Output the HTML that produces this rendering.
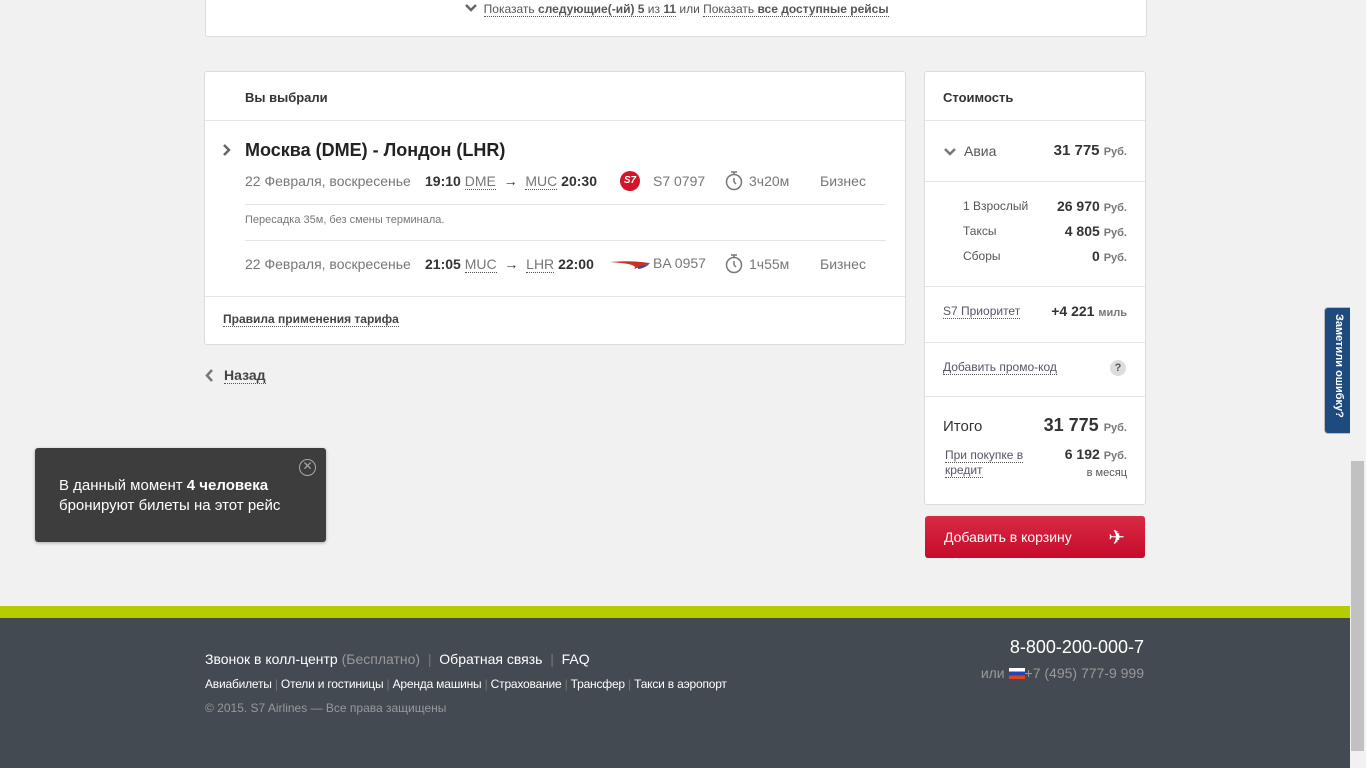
<!DOCTYPE html>
<html><head><meta charset="utf-8"><style>
*{margin:0;padding:0;box-sizing:border-box}
body{width:1366px;height:768px;overflow:hidden;background:#f1f1f1;font-family:"Liberation Sans",sans-serif;color:#333;position:relative;font-size:13px}
.a{position:absolute}
.card{position:absolute;background:#fff;border:1px solid #dcdcdc;border-radius:3px}
.g{color:#777}
.u{border-bottom:1px dotted #555}
.hr{position:absolute;height:1px;background:#e5e5e5}
.b{font-weight:bold}
.r{font-size:11px;color:#777;font-weight:bold}
.sep{color:#777}
</style></head><body>
<div class="card" style="left:205px;top:-4px;width:942px;height:41px"></div>
<div class="a" style="left:465px;top:2px;font-size:12px;color:#555"><svg width="12" height="8" style="vertical-align:1px"><path d="M1 1 L6 6 L11 1" stroke="#666" stroke-width="2.5" fill="none"/></svg>&nbsp; <span class="u">Показать <b>следующие(-ий) 5</b> из <b>11</b></span> или <span class="u">Показать <b>все доступные рейсы</b></span></div>

<div class="card" style="left:204px;top:71px;width:702px;height:274px">
<div class="a b" style="left:40px;top:18px;font-size:13px">Вы выбрали</div>
<div class="hr" style="left:0;right:0;top:48px"></div>
<svg class="a" style="left:18px;top:72px" width="8" height="12"><path d="M1 1 L6 6 L1 11" stroke="#666" stroke-width="2.5" fill="none"/></svg>
<div class="a b" style="left:40px;top:68px;font-size:18px;color:#222">Москва (DME) - Лондон (LHR)</div>
<div class="a g" style="left:40px;top:101px;font-size:14px">22 Февраля, воскресенье</div>
<div class="a" style="left:220px;top:101px;font-size:14px"><b>19:10</b> <span class="u g">DME</span> &nbsp;→&nbsp; <span class="u g">MUC</span> <b>20:30</b></div>
<div class="a" style="left:415px;top:99px;width:20px;height:20px;border-radius:50%;background:#d4142b;color:#fff;font-size:10px;font-weight:bold;text-align:center;line-height:20px;font-style:italic">S7</div>
<div class="a g" style="left:448px;top:101px;font-size:14px">S7 0797</div>
<svg class="a" style="left:519px;top:97px" width="20" height="22"><circle cx="10" cy="13" r="7.5" stroke="#777" stroke-width="1.5" fill="none"/><path d="M7 3 H13 M10 3 V5.5 M10 13 V9 M10 13 L12 15" stroke="#777" stroke-width="1.5" fill="none"/></svg>
<div class="a g" style="left:544px;top:101px;font-size:14px">3ч20м</div>
<div class="a g" style="left:615px;top:101px;font-size:14px">Бизнес</div>
<div class="hr" style="left:40px;width:641px;top:132px"></div>
<div class="a g" style="left:40px;top:142px;font-size:11px">Пересадка 35м, без смены терминала.</div>
<div class="hr" style="left:40px;width:641px;top:168px"></div>
<div class="a g" style="left:40px;top:184px;font-size:14px">22 Февраля, воскресенье</div>
<div class="a" style="left:220px;top:184px;font-size:14px"><b>21:05</b> <span class="u g">MUC</span> &nbsp;→&nbsp; <span class="u g">LHR</span> <b>22:00</b></div>
<svg class="a" style="left:405px;top:186px" width="42" height="12"><path d="M0 4 Q20 2 40 5 Q30 9 24 11 Q30 6 0 4Z" fill="#c8312a"/><path d="M28 9 Q36 7 40 5 Q36 10 28 11Z" fill="#2c4a9a"/></svg>
<div class="a g" style="left:448px;top:183px;font-size:14px">BA 0957</div>
<svg class="a" style="left:519px;top:180px" width="20" height="22"><circle cx="10" cy="13" r="7.5" stroke="#777" stroke-width="1.5" fill="none"/><path d="M7 3 H13 M10 3 V5.5 M10 13 V9 M10 13 L12 15" stroke="#777" stroke-width="1.5" fill="none"/></svg>
<div class="a g" style="left:544px;top:184px;font-size:14px">1ч55м</div>
<div class="a g" style="left:615px;top:184px;font-size:14px">Бизнес</div>
<div class="hr" style="left:0;right:0;top:224px"></div>
<div class="a b u" style="left:18px;top:240px;font-size:12px;color:#444">Правила применения тарифа</div>
</div>
<svg class="a" style="left:205px;top:369px" width="9" height="13"><path d="M7 1 L2 6.5 L7 12" stroke="#777" stroke-width="2.5" fill="none"/></svg>
<div class="a b u" style="left:224px;top:367px;font-size:14px;color:#444">Назад</div>

<div class="a" style="left:35px;top:448px;width:291px;height:94px;background:#3d3d3d;border-radius:3px;color:#fff;font-size:15px;padding:28px 0 0 24px;line-height:20px;box-shadow:0 1px 3px rgba(0,0,0,.3)">В данный момент <b>4 человека</b><br>бронируют билеты на этот рейс
<div class="a" style="left:264px;top:11px;width:17px;height:17px;border:1.5px solid #aaa;border-radius:50%;color:#aaa;font-size:12px;line-height:13px;text-align:center">✕</div></div>

<div class="card" style="left:924px;top:71px;width:222px;height:434px">
<div class="a b" style="left:18px;top:18px;font-size:13px">Стоимость</div>
<div class="hr" style="left:0;right:0;top:48px"></div>
<svg class="a" style="left:19px;top:76px" width="12" height="8"><path d="M1 1 L6 6 L11 1" stroke="#777" stroke-width="2.5" fill="none"/></svg>
<div class="a" style="left:39px;top:71px;font-size:14px;color:#555">Авиа</div>
<div class="a" style="right:18px;top:70px;font-size:15px"><b>31 775</b> <span class="r">Руб.</span></div>
<div class="hr" style="left:0;right:0;top:109px"></div>
<div class="a" style="left:38px;top:127px;font-size:12px;color:#555">1 Взрослый</div>
<div class="a" style="left:38px;top:152px;font-size:12px;color:#555">Таксы</div>
<div class="a" style="left:38px;top:177px;font-size:12px;color:#555">Сборы</div>
<div class="a" style="right:18px;top:126px;font-size:14px"><b>26 970</b> <span class="r">Руб.</span></div>
<div class="a" style="right:18px;top:151px;font-size:14px"><b>4 805</b> <span class="r">Руб.</span></div>
<div class="a" style="right:18px;top:176px;font-size:14px"><b>0</b> <span class="r">Руб.</span></div>
<div class="hr" style="left:0;right:0;top:214px"></div>
<div class="a u" style="left:18px;top:232px;font-size:12px;color:#556">S7 Приоритет</div>
<div class="a" style="right:18px;top:231px;font-size:14px"><b>+4 221</b> <span class="r">миль</span></div>
<div class="hr" style="left:0;right:0;top:270px"></div>
<div class="a u" style="left:18px;top:288px;font-size:12px;color:#556">Добавить промо-код</div>
<div class="a b" style="left:185px;top:288px;width:16px;height:16px;border-radius:50%;background:#ddd;font-size:11px;text-align:center;line-height:16px;color:#555">?</div>
<div class="hr" style="left:0;right:0;top:324px"></div>
<div class="a" style="left:18px;top:346px;font-size:15px;color:#333">Итого</div>
<div class="a" style="right:18px;top:343px;font-size:18px"><b>31 775</b> <span class="r">Руб.</span></div>
<div class="a" style="left:20px;top:376px;font-size:12px;color:#556;line-height:15px"><span class="u">При покупке в</span><br><span class="u">кредит</span></div>
<div class="a" style="right:18px;top:375px;font-size:14px;text-align:right;line-height:15px"><b>6 192</b> <span class="r">Руб.</span><br><span style="font-size:11px;color:#555">в месяц</span></div>
</div>
<div class="a" style="left:925px;top:516px;width:220px;height:42px;background:linear-gradient(#d72a45,#c70b2a);border-radius:3px;color:#fff;font-size:14px;padding:13px 0 0 19px">Добавить в корзину<span class="a" style="right:20px;top:9px;font-size:20px">✈</span></div>

<div class="a" style="left:1324px;top:307px;width:26px;height:127px;background:#1e4a7d;border-radius:4px 0 0 4px;border:1px solid #bbb;border-right:none"><div class="a b" style="left:20px;top:6px;transform:rotate(90deg);transform-origin:0 0;white-space:nowrap;color:#fff;font-size:11px">Заметили ошибку?</div></div>

<div class="a" style="left:0;top:606px;width:1350px;height:12px;background:#b5cc00"></div>
<div class="a" style="left:0;top:618px;width:1350px;height:150px;background:#434a51"></div>
<div class="a" style="left:205px;top:651px;font-size:14px;color:#fff">Звонок в колл-центр <span style="color:#999">(Бесплатно)</span> <span class="sep">&nbsp;|&nbsp;</span> Обратная связь <span class="sep">&nbsp;|&nbsp;</span> FAQ</div>
<div class="a" style="left:205px;top:677px;font-size:12px;color:#fff;letter-spacing:-0.2px">Авиабилеты <span class="sep">|</span> Отели и гостиницы <span class="sep">|</span> Аренда машины <span class="sep">|</span> Страхование <span class="sep">|</span> Трансфер <span class="sep">|</span> Такси в аэропорт</div>
<div class="a" style="left:205px;top:701px;font-size:12px;color:#999">© 2015. S7 Airlines — Все права защищены</div>
<div class="a" style="right:222px;top:637px;font-size:18px;color:#fff">8-800-200-000-7</div>
<div class="a" style="right:222px;top:665px;font-size:14px;color:#999">или <span style="display:inline-block;width:16px;height:11px;background:linear-gradient(#fff 33%,#2545b5 33% 66%,#d42 66%);vertical-align:-1px"></span>+7 (495) 777-9 999</div>

<div class="a" style="left:1350px;top:0;width:16px;height:768px;background:#f1f1f1"></div>
<div class="a" style="left:1351px;top:461px;width:13px;height:290px;background:#c1c1c1"></div>
</body></html>
